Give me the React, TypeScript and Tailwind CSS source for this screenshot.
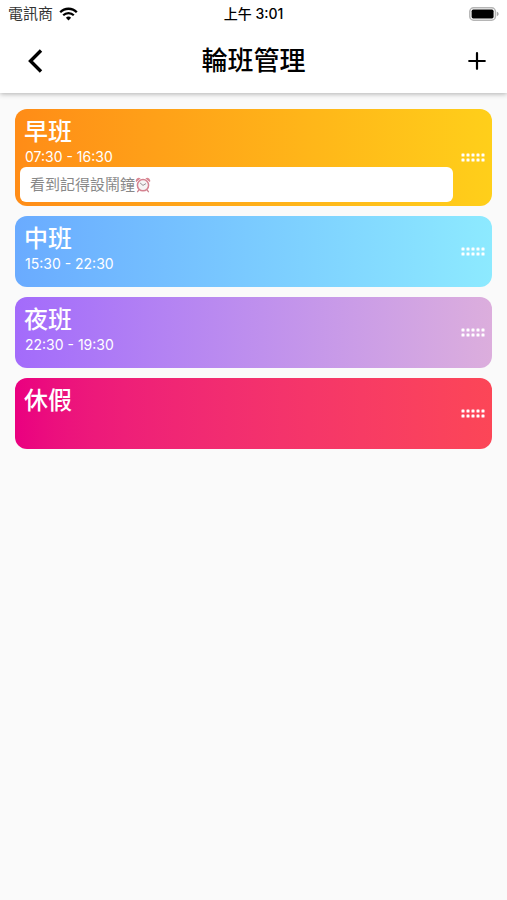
const shifts = [
  {
    name: '早班',
    time: '07:30 - 16:30',
    note: '看到記得設鬧鐘',
    background: 'bg-linear-to-r from-[#ff8c17] to-[#ffcf1a]',
  },
  {
    name: '中班',
    time: '15:30 - 22:30',
    note: '',
    background: 'bg-linear-to-r from-[#6aabff] to-[#8deaff]',
  },
  {
    name: '夜班',
    time: '22:30 - 19:30',
    note: '',
    background: 'bg-linear-to-r from-[#a36bfb] to-[#dcaedd]',
  },
  {
    name: '休假',
    time: '',
    note: '',
    background: 'bg-linear-to-r from-[#ea0080] to-[#fc4657]',
  },
];

function WifiIcon() {
  return (
    <svg className="h-[14px] w-[19px]" viewBox="0 0 19 14" fill="none" stroke="black" role="img" aria-label="Wi-Fi">
      <path d="M1.2 5.2a11.7 11.7 0 0 1 16.6 0" strokeWidth="2.3" />
      <path d="M4.2 8.3a7.5 7.5 0 0 1 10.6 0" strokeWidth="2.2" />
      <path d="M9.5 13.4 6.9 10.8a3.7 3.7 0 0 1 5.2 0z" fill="black" stroke="none" />
    </svg>
  );
}

function BatteryIcon() {
  return (
    <svg className="h-[14px] w-[30px]" viewBox="0 0 30 14" role="img" aria-label="Battery">
      <rect x="0.8" y="0.8" width="25.6" height="12.4" rx="3.8" fill="white" stroke="#b5b5b5" strokeWidth="1.5" />
      <rect x="2.6" y="2.6" width="22" height="8.8" rx="1.6" fill="black" />
      <path d="M27.8 4.8c2.4.6 2.4 3.8 0 4.4z" fill="#a8a8a8" />
    </svg>
  );
}

function BackIcon() {
  return (
    <svg className="h-6 w-4" viewBox="0 0 16 24" fill="none" stroke="black" strokeWidth="3.4" aria-hidden="true">
      <path d="M14 1.5 3.5 12 14 22.5" />
    </svg>
  );
}

function PlusIcon() {
  return (
    <svg className="size-[18px]" viewBox="0 0 18 18" stroke="black" strokeWidth="2.2" strokeLinecap="round" aria-hidden="true">
      <path d="M9 1.2v15.6M1.2 9h15.6" />
    </svg>
  );
}

function AlarmIcon() {
  return (
    <svg className="size-4" viewBox="0 0 16 16" fill="none" role="img" aria-label="⏰">
      <path d="m4 12.8-1.4 1.9M12 12.8l1.4 1.9" stroke="#c9838e" strokeWidth="1.3" strokeLinecap="round" />
      <path d="M1 5.2A3 3 0 0 1 5.6 1.6zM15 5.2a3 3 0 0 0-4.6-3.6z" fill="#d98793" />
      <circle cx="8" cy="8.2" r="5.6" fill="#f5f3f3" stroke="#d58290" strokeWidth="1.5" />
      <path d="M5.4 6.2 8 8.4l2.6-1.6" stroke="#8b8288" strokeWidth="0.9" strokeLinecap="round" />
    </svg>
  );
}

function DragDots() {
  return (
    <svg className="h-[9px] w-6" viewBox="0 0 24 9" fill="white" aria-hidden="true">
      {[0, 5, 10, 15, 20].map((x) => (
        <g key={x}>
          <rect x={x + 0.5} y="0.5" width="3" height="3" rx="0.6" />
          <rect x={x + 0.5} y="5.5" width="3" height="3" rx="0.6" />
        </g>
      ))}
    </svg>
  );
}

export default function App() {
  return (
    <div className="flex min-h-screen flex-col bg-[#fafafa] font-[Inter,'Noto_Sans_CJK_TC',sans-serif] text-black">
      <header className="relative bg-white shadow-[0_1px_5px_rgba(0,0,0,0.3)]">
        {/* Status bar */}
        <div className="grid h-7 grid-cols-3 items-center px-2 text-[15px] leading-5">
          <div className="flex items-center gap-1.5 text-[#333]">
            <span>電訊商</span>
            <WifiIcon />
          </div>
          <span className="text-center text-sm font-medium">上午 3:01</span>
          <div className="flex justify-end">
            <BatteryIcon />
          </div>
        </div>

        {/* Title bar */}
        <div className="grid h-[65px] grid-cols-[60px_1fr_60px] items-center">
          <button type="button" aria-label="返回" className="flex h-12 items-center justify-center pl-2.5">
            <BackIcon />
          </button>
          <h1 className="text-center text-[26px] leading-8 font-medium">輪班管理</h1>
          <button type="button" aria-label="新增班別" className="flex h-12 items-center justify-center">
            <PlusIcon />
          </button>
        </div>
      </header>

      {/* Shift list */}
      <ul className="flex flex-col gap-2.5 px-[15px] py-4">
        {shifts.map((shift) => (
          <li
            key={shift.name}
            className={`flex min-h-[71px] items-center rounded-xl text-white ${shift.background}`}
          >
            <div className="min-w-0 flex-1 self-stretch pt-2 pb-1 pl-[5px]">
              <h2 className="pl-1 text-2xl leading-[29px] font-medium">{shift.name}</h2>
              {shift.time && <p className="pl-[5px] text-sm leading-[21px]">{shift.time}</p>}
              {shift.note && (
                <p className="flex h-[35px] items-center rounded-md bg-white pl-[10px] text-[15px] leading-5 text-[#888]">
                  {shift.note}
                  <AlarmIcon />
                </p>
              )}
            </div>
            <button type="button" aria-label={`移動${shift.name}`} className="flex h-10 w-[39px] items-center justify-center">
              <DragDots />
            </button>
          </li>
        ))}
      </ul>
    </div>
  );
}
